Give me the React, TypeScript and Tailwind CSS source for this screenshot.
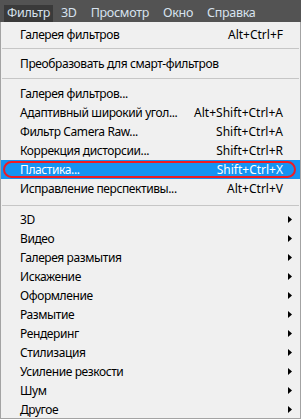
import { ReactNode } from 'react'

type Row = { label: string; keys?: string; sub?: boolean; active?: boolean }

const top1: Row[] = [{ label: 'Галерея фильтров', keys: 'Alt+Ctrl+F' }]
const top2: Row[] = [{ label: 'Преобразовать для смарт-фильтров' }]
const filters: Row[] = [
  { label: 'Галерея фильтров...' },
  { label: 'Адаптивный широкий угол...', keys: 'Alt+Shift+Ctrl+A' },
  { label: 'Фильтр Camera Raw...', keys: 'Shift+Ctrl+A' },
  { label: 'Коррекция дисторсии...', keys: 'Shift+Ctrl+R' },
  { label: 'Пластика...', keys: 'Shift+Ctrl+X', active: true },
  { label: 'Исправление перспективы...', keys: 'Alt+Ctrl+V' },
]
const groups: Row[] = ['3D', 'Видео', 'Галерея размытия', 'Искажение', 'Оформление', 'Размытие', 'Рендеринг', 'Стилизация', 'Усиление резкости', 'Шум', 'Другое'].map((label) => ({ label, sub: true }))

function Arrow() {
  return (
    <svg width="4" height="7" viewBox="0 0 4 7" className="absolute right-[8px] top-[6px]">
      <path d="M0 0 L4 3.5 L0 7 Z" fill="#000" />
    </svg>
  )
}

function Item({ row }: { row: Row }) {
  return (
    <div className={`relative flex items-center h-[19px] pl-[19px] pr-[17px] ${row.active ? 'bg-[#1593f2] text-white' : 'text-black'}`}>
      <span className="flex-1 whitespace-nowrap tracking-[-0.4px]">{row.label}</span>
      {row.keys && <span className="whitespace-nowrap">{row.keys}</span>}
      {row.sub && <Arrow />}
      {row.active && <div className="absolute left-[2px] right-[4px] top-[1px] bottom-[1px] rounded-full border-2 border-[#ee1c24]" />}
    </div>
  )
}

function Sep({ cls }: { cls: string }) {
  return <div className={`h-px bg-[#c6c6c6] mx-[1px] ${cls}`} />
}

function Block({ children }: { children: ReactNode }) {
  return <div>{children}</div>
}

export default function App() {
  return (
    <div className="w-[301px] h-[419px] overflow-hidden bg-[#535353] text-[12px] leading-none" style={{ fontFamily: '"Noto Sans", sans-serif' }}>
      {/* Menu bar */}
      <div className="h-[22px] flex items-center text-[12.5px] text-[#d7e2ee] pl-[4px] tracking-[-0.3px]">
        <div className="h-[17px] mt-[4px] px-[3px] flex items-center bg-[#3a3a3a]">Фильтр</div>
        <div className="px-[7px] ml-[1px] mt-[4px]">3D</div>
        <div className="px-[7px] mt-[4px]">Просмотр</div>
        <div className="px-[7px] mt-[4px]">Окно</div>
        <div className="px-[7px] mt-[4px]">Справка</div>
      </div>

      {/* Dropdown */}
      <div className="h-[397px] bg-[#f0f0f0] border-x border-b border-[#a3a3a3] pt-[3px]">
        <Block>{top1.map((r) => <Item key={r.label} row={r} />)}</Block>
        <Sep cls="mt-[4px] mb-[5px]" />
        <Block>{top2.map((r) => <Item key={r.label} row={r} />)}</Block>
        <Sep cls="mt-[5px] mb-[5px]" />
        <Block>{filters.map((r) => <Item key={r.label} row={r} />)}</Block>
        <Sep cls="mt-[7px] mb-[4px]" />
        <Block>{groups.map((r) => <Item key={r.label} row={r} />)}</Block>
      </div>
    </div>
  )
}
